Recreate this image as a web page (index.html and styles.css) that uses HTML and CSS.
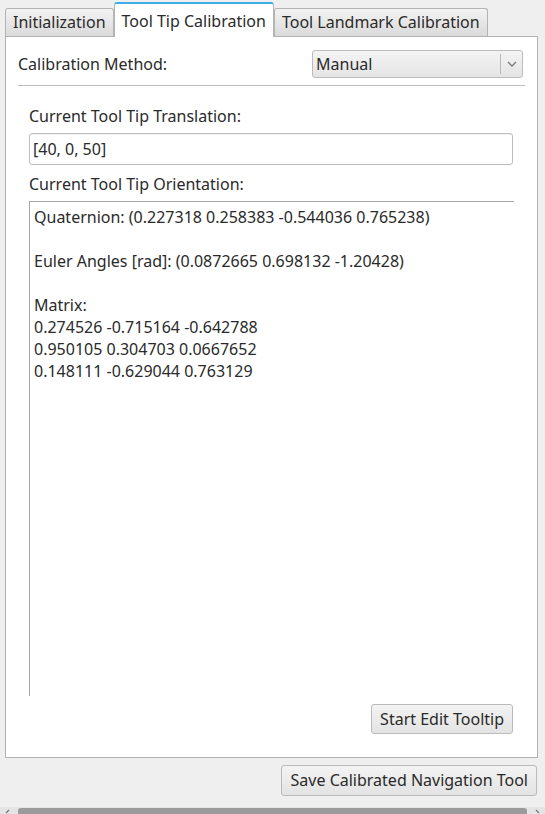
FILE: index.html
```html
<!DOCTYPE html>
<html>
<head>
<meta charset="utf-8">
<link rel="stylesheet" href="styles.css">
</head>
<body>
<div class="window">
  <div class="tabbar">
    <div class="tab">Initialization</div>
    <div class="tab active">Tool Tip Calibration</div>
    <div class="tab">Tool Landmark Calibration</div>
  </div>
  <div class="pane">
    <div class="method-row">
      <span class="label">Calibration Method:</span>
      <div class="combo">
        <span class="combo-text">Manual</span>
        <span class="combo-sep"></span>
        <svg class="combo-arrow" width="10" height="6" viewBox="0 0 10 6"><path d="M1 1 L5 5 L9 1" fill="none" stroke="#7a7a7a" stroke-width="1.3"/></svg>
      </div>
    </div>
    <div class="separator"></div>
    <div class="group">
      <div class="field-label first">Current Tool Tip Translation:</div>
      <div class="lineedit">[40, 0, 50]</div>
      <div class="field-label second">Current Tool Tip Orientation:</div>
      <div class="textbox">
        <div class="line">Quaternion: (0.227318 0.258383 -0.544036 0.765238)</div>
        <div class="line">&nbsp;</div>
        <div class="line">Euler Angles [rad]: (0.0872665 0.698132 -1.20428)</div>
        <div class="line">&nbsp;</div>
        <div class="line">Matrix:</div>
        <div class="line">0.274526 -0.715164 -0.642788</div>
        <div class="line">0.950105 0.304703 0.0667652</div>
        <div class="line">0.148111 -0.629044 0.763129</div>
      </div>
      <div class="btn-row">
        <div class="button">Start Edit Tooltip</div>
      </div>
    </div>
  </div>
  <div class="save-row">
    <div class="button save">Save Calibrated Navigation Tool</div>
  </div>
</div>
<div class="hscroll">
  <svg class="arrow" width="8" height="7" viewBox="0 0 8 7"><path d="M6 1 L3 4" fill="none" stroke="#777" stroke-width="1.2"/></svg>
  <div class="handle"></div>
  <svg class="arrow" width="8" height="7" viewBox="0 0 8 7"><path d="M2 1 L5 4" fill="none" stroke="#777" stroke-width="1.2"/></svg>
</div>
</body>
</html>
```

FILE: styles.css
```css
* { box-sizing: border-box; }
html, body {
  margin: 0;
  padding: 0;
  background: #efefef;
}
body {
  width: 545px;
  height: 814px;
  overflow: hidden;
  font-family: "Noto Sans", "DejaVu Sans", sans-serif;
  font-size: 16px;
  color: #2a2a2a;
  position: relative;
}
.window {
  padding: 2px 7px 0 5px;
}
.tabbar {
  display: flex;
  align-items: flex-end;
  height: 35px;
  margin-bottom: -1px;
  position: relative;
  z-index: 1;
}
.tab {
  height: 28px;
  line-height: 26px;
  padding: 0 7px 0 7px;
  border: 1px solid #b4b4b4;
  border-bottom: none;
  border-radius: 3px 3px 0 0;
  background: linear-gradient(#f3f3f3, #dadada);
  color: #2a2a2a;
  white-space: nowrap;
  margin-bottom: 1px;
}
.tab + .tab { margin-left: -1px; }
.tab.active {
  height: 35px;
  line-height: 34px;
  padding: 0 7px 0 7px;
  background: #ffffff;
  border-color: #b4b4b4;
  border-top: 2px solid #3daee9;
  margin-bottom: 0;
  margin-left: 0;
  position: relative;
  z-index: 2;
}
.tab.active + .tab { margin-left: 0; }
.pane {
  height: 722px;
  background: #ffffff;
  border: 1px solid #b2b2b2;
  padding: 13px 14px 0 12px;
}
.method-row {
  display: flex;
  align-items: center;
  justify-content: space-between;
  height: 28px;
}
.combo {
  width: 211px;
  height: 28px;
  border: 1px solid #bcbcbc;
  border-radius: 3px;
  background: linear-gradient(#f4f4f4, #e4e4e4);
  display: flex;
  align-items: center;
  padding-left: 3px;
}
.combo-text { flex: 1; }
.combo-sep {
  width: 1px;
  height: 20px;
  background: #b8b8b8;
  margin-right: 6px;
}
.combo-arrow { margin-right: 5px; }
.separator {
  height: 1px;
  background: #bdbdbd;
  margin-top: 7px;
  margin-right: -2px;
}
.group {
  padding: 0 10px 0 11px;
}
.field-label {
  height: 22px;
  line-height: 22px;
}
.field-label.first { margin-top: 19px; }
.field-label.second { margin-top: 8px; }
.lineedit {
  height: 32px;
  margin-top: 6px;
  border: 1px solid #bdbdbd;
  border-radius: 3px;
  background: #fff;
  box-shadow: inset 0 1px 1px rgba(0,0,0,0.06);
  line-height: 30px;
  padding-left: 3px;
}
.textbox {
  margin-top: 6px;
  height: 495px;
  border-top: 1px solid #a6a6a6;
  border-left: 1px solid #a6a6a6;
  margin-right: -1px;
  padding: 4px 0 0 4px;
}
.line {
  height: 22px;
  line-height: 22px;
  white-space: nowrap;
}
.btn-row {
  display: flex;
  justify-content: flex-end;
  margin-top: 8px;
}
.button {
  height: 30px;
  line-height: 28px;
  padding: 0 8px;
  border: 1px solid #bababa;
  border-radius: 3px;
  background: linear-gradient(#f3f3f3, #e3e3e3);
  white-space: nowrap;
}
.button.save {
  height: 31px;
  line-height: 29px;
  padding: 0 8px 0 9px;
}
.save-row {
  display: flex;
  justify-content: flex-end;
  margin-top: 7px;
  margin-right: 1px;
}
.hscroll {
  position: absolute;
  left: 0;
  right: 0;
  top: 807px;
  height: 7px;
  background: #e4e4e4;
  display: flex;
  align-items: flex-start;
}
.hscroll .handle {
  flex: 1;
  height: 7px;
  margin: 1px 4px 0 4px;
  border-radius: 3px 3px 0 0;
  background: #9b9b9b;
}
.hscroll .arrow {
  flex: none;
  margin: 2px 3px 0 3px;
}
```
